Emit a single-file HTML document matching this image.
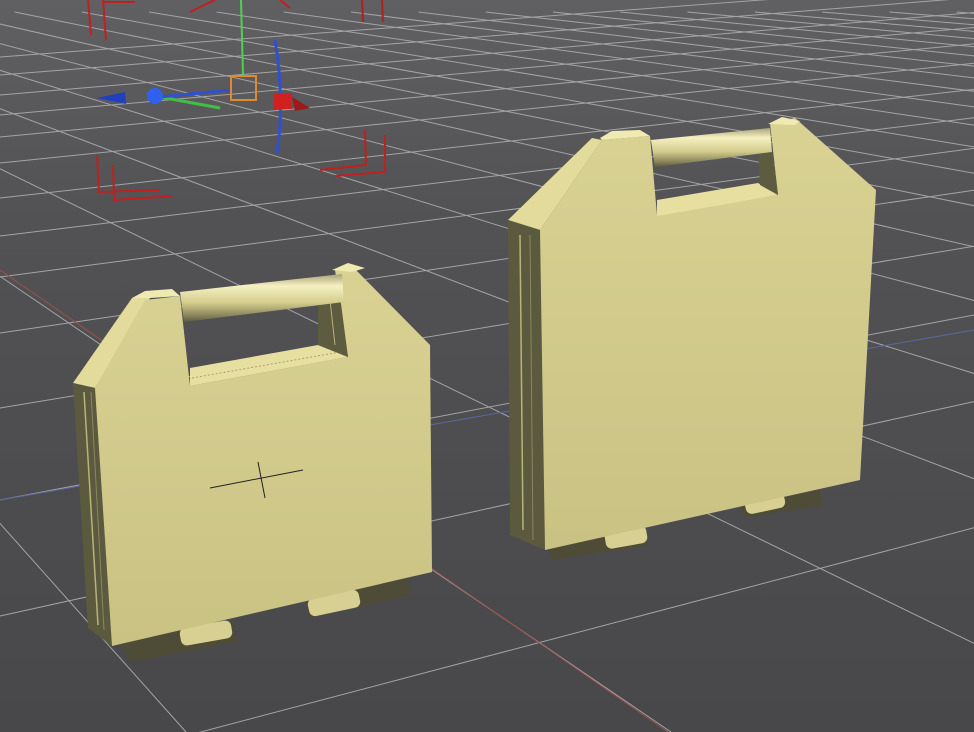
<!DOCTYPE html>
<html><head><style>
html,body{margin:0;padding:0;background:#4d4d4f;width:974px;height:732px;overflow:hidden;}
svg{display:block}
</style></head><body>
<svg id="s" width="974" height="732" viewBox="0 0 974 732" xmlns="http://www.w3.org/2000/svg">
<defs>
<linearGradient id="bg" x1="0" y1="0" x2="0" y2="1">
<stop offset="0" stop-color="#606062"/><stop offset="0.3" stop-color="#525254"/><stop offset="1" stop-color="#48484a"/></linearGradient>
<linearGradient id="hdl" x1="0" y1="0" x2="0" y2="1">
<stop offset="0" stop-color="#a8a277"/><stop offset="0.25" stop-color="#f6f0c2"/><stop offset="0.6" stop-color="#d3cc8c"/><stop offset="0.85" stop-color="#8e895f"/><stop offset="1" stop-color="#5c5a40"/></linearGradient>
<linearGradient id="fr" x1="0" y1="0" x2="0" y2="1">
<stop offset="0" stop-color="#d9d293"/><stop offset="1" stop-color="#c9c283"/></linearGradient>
<clipPath id="c"><rect width="974" height="732"/></clipPath>
</defs>
<rect width="974" height="732" fill="url(#bg)"/>
<g id="grid" stroke="#a4a4a6" stroke-width="1" fill="none" clip-path="url(#c)"></g>
<line x1="0" y1="270" x2="668" y2="732" stroke="#9a5050" stroke-width="1"/>
<line x1="0" y1="500" x2="974" y2="330" stroke="#5c68a0" stroke-width="1"/>
<!-- gizmo -->
<g stroke-width="2" fill="none">
<path d="M88 0 L91 35 M103 0 L106 40 M103 2 L135 2" stroke="#c02020"/>
<path d="M190 12 L215 0 M280 0 L290 8" stroke="#c02020"/>
<path d="M362 0 L363 22 M382 0 L383 22" stroke="#b02020"/>
<path d="M97 155 L99 192 L160 190 M113 165 L114 200 L172 196" stroke="#c02020"/>
<path d="M365 130 L366 165 L320 170 M385 135 L385 172 L335 176" stroke="#c02020"/>
<path d="M241 0 L243 75" stroke="#50d050"/>
<path d="M160 97 L220 108" stroke="#40c040" stroke-width="3"/>
<path d="M275 40 Q285 100 277 153" stroke="#3050d0" stroke-width="3"/>
<path d="M160 97 L230 90" stroke="#3050d0" stroke-width="3"/>
<rect x="231" y="76" width="25" height="24" stroke="#e08a30"/>
</g>
<polygon points="97,98 125,92 126,104" fill="#2040c0"/>
<circle cx="155" cy="96" r="8" fill="#3060f0"/>
<rect x="274" y="93" width="18" height="16" fill="#d02020"/>
<polygon points="292,97 310,108 295,111" fill="#a01818"/>
<!-- left case hinges -->
<g>
<polygon points="118,640 180,628 232,620 236,642 130,662" fill="#4e4c36"/>
<rect x="180" y="624" width="52" height="18" rx="6" fill="#d8d092" transform="rotate(-10 206 633)"/>
<polygon points="305,598 408,578 410,595 310,618" fill="#4e4c36"/>
<rect x="308" y="594" width="52" height="18" rx="6" fill="#d8d092" transform="rotate(-12 334 603)"/>
</g>
<!-- left case -->
<polygon points="73,383 132,298 150,298 95,388" fill="#e2db9c"/>
<polygon points="73,383 95,388 112,646 88,628" fill="#5c5a3e"/>
<line x1="84" y1="392" x2="98" y2="625" stroke="#b8b27c" stroke-width="1.5"/>
<line x1="91" y1="392" x2="104" y2="630" stroke="#8a8660" stroke-width="1"/>
<polygon points="95,388 145,300 180,296 190,386 348,357 335,270 352,266 430,345 432,572 112,646" fill="url(#fr)"/>
<polygon points="190,368 318,345 348,357 190,386" fill="#e6dfa0"/>
<line x1="192" y1="378" x2="340" y2="352" stroke="#a8a274" stroke-width="1" stroke-dasharray="2 2"/>
<polygon points="318,300 340,296 348,357 318,345" fill="#5e5c40"/>
<line x1="330" y1="300" x2="335" y2="345" stroke="#b8b27c" stroke-width="1"/>
<polygon points="180,292 342,274 344,302 184,322" fill="url(#hdl)"/>
<polygon points="132,298 145,291 172,289 180,296 150,298" fill="#efe9b2"/>
<polygon points="332,270 348,263 365,268 352,272" fill="#efe9b2"/>
<path d="M210 488 L303 470 M258 462 L265 498" stroke="#222" stroke-width="1"/>
<!-- right case hinges -->
<polygon points="548,545 605,535 645,527 648,545 552,560" fill="#4e4c36"/>
<rect x="605" y="528" width="42" height="18" rx="6" fill="#d8d092" transform="rotate(-10 626 537)"/>
<polygon points="740,505 820,490 822,505 745,518" fill="#4e4c36"/>
<rect x="745" y="495" width="40" height="16" rx="6" fill="#d8d092" transform="rotate(-12 765 503)"/>
<!-- right case -->
<polygon points="508,220 592,138 602,140 540,230" fill="#e2db9c"/>
<polygon points="508,220 540,230 545,550 510,535" fill="#5c5a3e"/>
<line x1="520" y1="235" x2="523" y2="530" stroke="#b8b27c" stroke-width="1.5"/>
<line x1="530" y1="235" x2="533" y2="540" stroke="#8a8660" stroke-width="1"/>
<polygon points="540,230 602,140 650,136 657,215 778,195 770,123 795,118 876,190 860,480 545,550" fill="url(#fr)"/>
<polygon points="657,200 758,183 778,195 657,216" fill="#e6dfa0"/>
<polygon points="758,150 772,148 778,195 760,185" fill="#5e5c40"/>
<polygon points="651,140 770,128 772,152 655,167" fill="url(#hdl)"/>
<polygon points="600,138 612,131 640,130 650,136 602,140" fill="#efe9b2"/>
<polygon points="768,124 782,117 800,121 795,125" fill="#efe9b2"/>
</svg>
<script>
var g=document.getElementById('grid'),ns='http://www.w3.org/2000/svg';
function L(x1,y1,x2,y2){var l=document.createElementNS(ns,'line');l.setAttribute('x1',x1);l.setAttribute('y1',y1);l.setAttribute('x2',x2);l.setAttribute('y2',y2);g.appendChild(l);}
[57,75,95,115,137,163,198,236,277,333,408,500,616,785].forEach(function(y){var s=-(0.06+0.00026*y);L(0,y,974,y+s*974);});
var VB=[-560,-104];
for(var k=-4;k<22;k++){var xb=186+k*485;var s=(732-VB[1])/(xb-VB[0]);if(s<=0)continue;var y0=12;L(VB[0]+(y0-VB[1])/s,y0,xb,732);}
</script>
</body></html>
